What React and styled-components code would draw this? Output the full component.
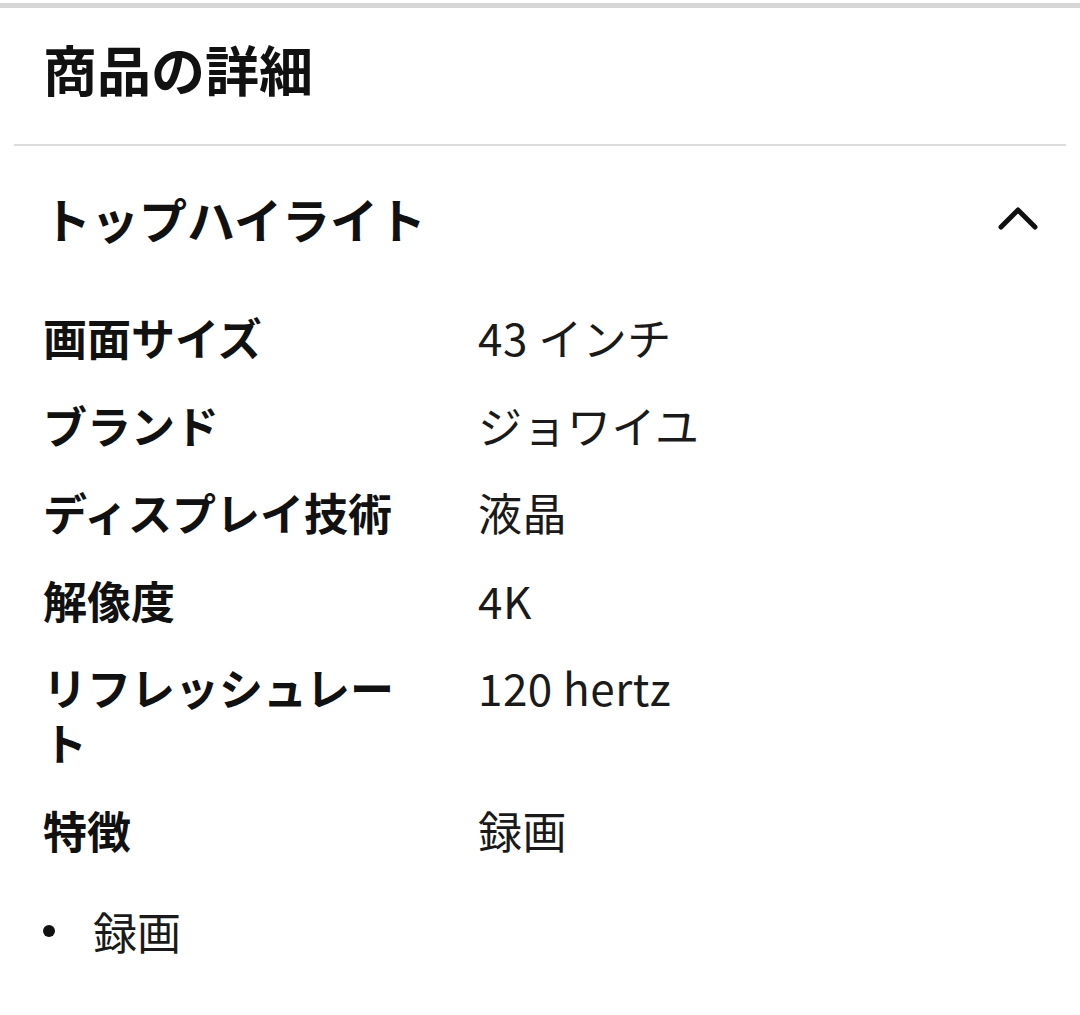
import React from "react";
import styled, { createGlobalStyle } from "styled-components";

const GlobalStyle = createGlobalStyle`
  body {
    margin: 0;
    background: #ffffff;
    font-family: "Noto Sans CJK JP", "Noto Sans", sans-serif;
    color: #111111;
  }
`;

const Page = styled.div`
  width: 1080px;
  min-height: 1015px;
  padding-top: 3px;
  box-sizing: border-box;
`;

const TopBar = styled.div`
  height: 5px;
  background-color: #d6d6d6;
`;

const Title = styled.h1`
  margin: 0;
  padding: 34px 43px 48px;
  font-size: 54px;
  line-height: 54px;
  font-weight: 700;
`;

const Hr = styled.hr`
  margin: 0 14px;
  height: 2px;
  border: 0;
  background-color: #dcdcdc;
`;

const SectionHeader = styled.div`
  display: flex;
  align-items: center;
  justify-content: space-between;
  padding: 48px 42px 0 43px;
`;

const SectionTitle = styled.h2`
  margin: 0;
  font-size: 48px;
  line-height: 48px;
  font-weight: 700;
`;

const Chevron = styled.svg`
  width: 40px;
  height: 40px;
  display: block;
`;

const SpecTable = styled.div`
  display: grid;
  grid-template-columns: 380px 1fr;
  column-gap: 55px;
  row-gap: 32.5px;
  padding: 68px 43px 0;
`;

const Label = styled.div`
  font-size: 44px;
  line-height: 55px;
  font-weight: 700;
  color: #111111;
`;

const Value = styled.div`
  font-size: 44px;
  line-height: 55px;
  font-weight: 400;
  letter-spacing: 0.5px;
  color: #1a1a1a;
`;

const BulletList = styled.ul`
  list-style: none;
  margin: 46px 0 0;
  padding: 0 43px;
`;

const BulletItem = styled.li`
  display: flex;
  align-items: center;
  gap: 38px;
  font-size: 44px;
  line-height: 55px;
  color: #1a1a1a;
`;

const Dot = styled.span`
  width: 12px;
  height: 12px;
  border-radius: 50%;
  background-color: #111111;
  flex-shrink: 0;
`;

const specs = [
  { label: "画面サイズ", value: "43 インチ" },
  { label: "ブランド", value: "ジョワイユ" },
  { label: "ディスプレイ技術", value: "液晶" },
  { label: "解像度", value: "4K" },
  { label: "リフレッシュレート", value: "120 hertz" },
  { label: "特徴", value: "録画" },
];

const App = () => {
  return (
    <Page>
      <GlobalStyle />
      <TopBar />
      <Title>商品の詳細</Title>
      <Hr />
      <SectionHeader>
        <SectionTitle>トップハイライト</SectionTitle>
        <Chevron viewBox="0 0 40 40">
          <polyline
            points="3,29 20,12 37,29"
            fill="none"
            stroke="#111"
            strokeWidth="5"
            strokeLinecap="round"
            strokeLinejoin="round"
          />
        </Chevron>
      </SectionHeader>
      <SpecTable>
        {specs.map((s) => (
          <React.Fragment key={s.label}>
            <Label>{s.label}</Label>
            <Value>{s.value}</Value>
          </React.Fragment>
        ))}
      </SpecTable>
      <BulletList>
        <BulletItem>
          <Dot />
          録画
        </BulletItem>
      </BulletList>
    </Page>
  );
};

export default App;
